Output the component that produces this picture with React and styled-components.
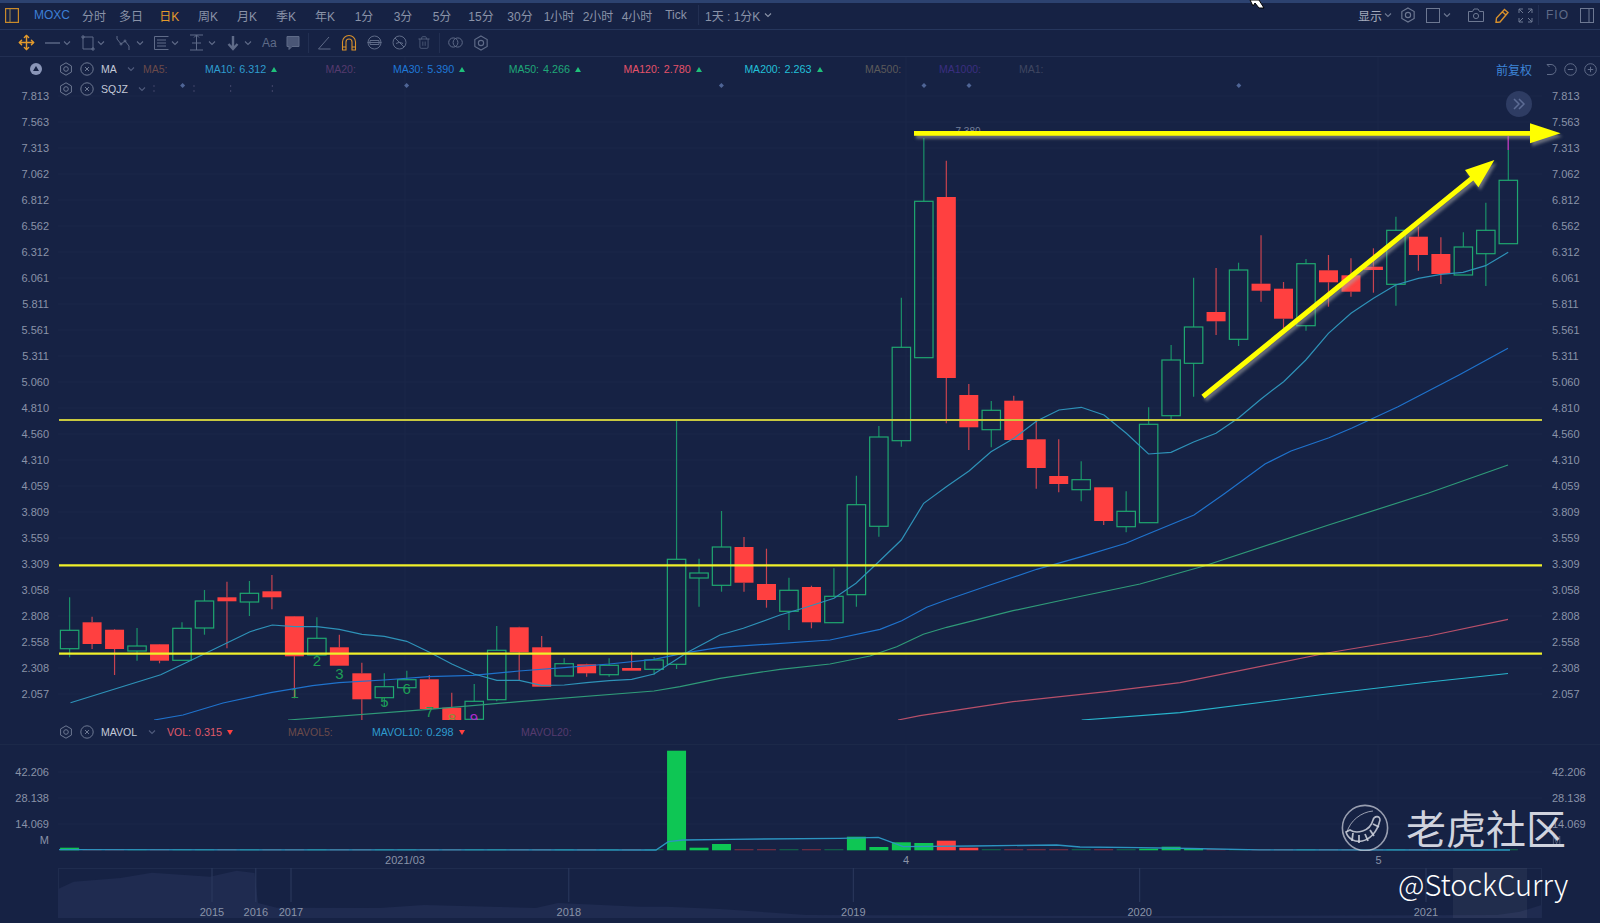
import styled, { createGlobalStyle } from "styled-components";
import { Move, Trash2 } from "lucide-react";

const GlobalStyle = createGlobalStyle`
  html, body {
    margin: 0;
    padding: 0;
    background: #162244;
    overflow: hidden;
  }
  * { box-sizing: border-box; }
`;

// styles
const Page = styled.div`
  position: relative;
  width: 1600px;
  height: 923px;
  overflow: hidden;
  background: #162244;
  color: #8a93a8;
  font-family: "Liberation Sans", "Noto Sans CJK SC", sans-serif;
  font-size: 12px;
`;

const TopStrip = styled.div`
  height: 3px;
  background: #2c4270;
`;

const Toolbar = styled.div`
  height: 27px;
  display: flex;
  align-items: center;
  padding: 0 6px 2px 5px;
  border-bottom: 1px solid #26365c;
`;

const BrandIcon = styled.svg`
  flex: none;
`;

const Symbol = styled.span`
  margin-left: 15px;
  width: 42px;
  color: #3d7fd6;
`;

const Tab = styled.span`
  width: ${(p) => p.$w || 39}px;
  text-align: center;
  white-space: nowrap;
  color: ${(p) => (p.$active ? "#e39a2c" : "#8a93a8")};
`;

const Divider = styled.span`
  flex: none;
  width: 1px;
  height: 20px;
  margin: ${(p) => p.$m || "0"};
  background: #222f52;
`;

const PeriodPicker = styled.span`
  display: flex;
  align-items: center;
  gap: 4px;
  margin-left: 6px;
  white-space: nowrap;
`;

const RightTools = styled.div`
  margin-left: auto;
  display: flex;
  align-items: center;
`;

const RightTool = styled.span`
  display: flex;
  align-items: center;
  margin-left: ${(p) => p.$ml || 0}px;
  color: ${(p) => p.$color || "#6d7892"};
`;

const FioLabel = styled.span`
  margin-left: 7px;
  font-size: 12px;
  letter-spacing: 1px;
  color: #5f6b88;
`;

const DrawBar = styled.div`
  height: 27px;
  display: flex;
  align-items: center;
  gap: 10px;
  padding: 0 0 1px 18px;
  border-bottom: 1px solid #222f52;
  color: #5f6b88;
`;

const Tool = styled.span`
  flex: none;
  width: ${(p) => p.$w}px;
  display: flex;
  align-items: center;
  justify-content: space-between;
  color: ${(p) => p.$color || "#5f6b88"};
`;

const AaLabel = styled.span`
  flex: none;
  width: 14px;
  font-size: 12px;
  color: #5f6b88;
`;

const PricePane = styled.div`
  position: relative;
  height: 663px;
  display: flex;
`;

const LeftAxis = styled.div`
  flex: none;
  width: 58px;
  padding: ${(p) => p.$pt}px 9px 0 0;
  text-align: right;
  font-size: 11px;
  color: #8a93a8;
`;

const RightAxis = styled.div`
  flex: none;
  width: 58px;
  padding: ${(p) => p.$pt}px 0 0 10px;
  font-size: 11px;
  color: #8a93a8;
`;

const AxisLabel = styled.div`
  height: ${(p) => p.$h || 26}px;
  line-height: ${(p) => p.$h || 26}px;
  opacity: ${(p) => p.$o || 1};
`;

const Plot = styled.svg`
  flex: none;
  display: block;
  width: 1484px;
  height: ${(p) => p.$h}px;
`;

const Legends = styled.div`
  position: absolute;
  top: 2px;
  left: 0;
  right: 0;
`;

const LegendRow = styled.div`
  height: 20px;
  display: flex;
  align-items: center;
  padding-left: ${(p) => p.$pl || 0}px;
`;

const CollapseDot = styled.svg`
  flex: none;
  margin-right: 17px;
`;

const LegendHead = styled.div`
  flex: none;
  width: ${(p) => p.$w}px;
  display: flex;
  align-items: center;
  gap: 7px;
  color: #6d7892;
`;

const HeadName = styled.span`
  font-size: 10.5px;
  color: #c3c9d8;
`;

const HeadChevron = styled.span`
  display: flex;
  margin-left: ${(p) => p.$ml || 3}px;
  color: #4f5b7c;
`;

const LegendItem = styled.div`
  flex: none;
  width: ${(p) => p.$w}px;
  display: flex;
  align-items: center;
  gap: 4px;
  color: ${(p) => p.$color};
  font-size: 10.5px;
  white-space: nowrap;
`;

const LegendValue = styled.span`
  font-size: 10.8px;
`;

const Tri = styled.span`
  width: 0;
  height: 0;
  margin-left: 1px;
  border-left: 3px solid transparent;
  border-right: 3px solid transparent;
  border-bottom: ${(p) => (p.$down ? "0" : `5px solid ${p.$color}`)};
  border-top: ${(p) => (p.$down ? `5px solid ${p.$color}` : "0")};
`;

const AdjustGroup = styled.div`
  margin-left: auto;
  display: flex;
  align-items: center;
  gap: 7px;
  padding-right: 3px;
  color: #5f6b88;
`;

const AdjustLabel = styled.span`
  margin-right: 7px;
  color: #3d85d8;
`;

const ExpandButton = styled.div`
  position: absolute;
  top: 34px;
  left: 1506px;
  width: 26px;
  height: 26px;
  border-radius: 50%;
  background: #2e3c63;
  color: #5d6c94;
  display: flex;
  align-items: center;
  justify-content: center;
`;

const VolumeLegend = styled.div`
  height: 25px;
  display: flex;
  align-items: center;
  padding-left: 59px;
  border-bottom: 1px solid #1c2949;
`;

const VolumePane = styled.div`
  height: 107px;
  display: flex;
`;

const TimeAxis = styled.svg`
  display: block;
  width: 1600px;
  height: 16px;
`;

const Navigator = styled.svg`
  display: block;
  width: 1600px;
  height: 50px;
`;

const Overlay = styled.svg`
  position: absolute;
  top: 0;
  left: 0;
  width: 1600px;
  height: 923px;
  pointer-events: none;
`;

const DrawnArrows = styled.g`
  fill: #ffff00;
  filter: drop-shadow(2px 3px 1.5px rgba(170, 170, 170, 0.55));
`;

const Watermark = styled.div`
  position: absolute;
  left: 1341px;
  top: 803px;
  display: flex;
  align-items: center;
  gap: 17px;
`;

const WatermarkText = styled.span`
  font-family: "Noto Sans CJK SC", sans-serif;
  font-size: 40px;
  line-height: 48px;
  font-weight: 400;
  color: #d0d3de;
  white-space: nowrap;
`;

const Handle = styled.div`
  position: absolute;
  left: 1398px;
  top: 861px;
  font-family: "Noto Sans CJK SC", sans-serif;
  font-size: 29px;
  line-height: 44px;
  font-weight: 300;
  color: #ffffff;
  white-space: nowrap;
`;

// small icons
const Chevron = ({ size = 8 }) => (
  <svg width={size} height={size} viewBox="0 0 8 8" fill="none" stroke="currentColor" strokeWidth="1.1">
    <path d="M1 2.5 4 5.5 7 2.5" />
  </svg>
);

const Gear = ({ size = 14 }) => (
  <svg width={size} height={size} viewBox="0 0 14 14" fill="none" stroke="currentColor" strokeWidth="1">
    <path d="M7 .8 12.4 3.9V10.1L7 13.2 1.6 10.1V3.9Z" />
    <circle cx="7" cy="7" r="2.3" />
  </svg>
);

const CloseCircle = ({ size = 14 }) => (
  <svg width={size} height={size} viewBox="0 0 14 14" fill="none" stroke="currentColor" strokeWidth="1">
    <circle cx="7" cy="7" r="6.2" />
    <path d="M5 5 9 9M9 5 5 9" />
  </svg>
);

const CircleSign = ({ plus }) => (
  <svg width="13" height="13" viewBox="0 0 13 13" fill="none" stroke="currentColor" strokeWidth="1">
    <circle cx="6.5" cy="6.5" r="5.8" />
    <path d={plus ? "M3.8 6.5H9.2M6.5 3.8V9.2" : "M3.8 6.5H9.2"} />
  </svg>
);

const ToolIcon = ({ w = 14, h = 16, d, fill = "none", sw = 1, children }) => (
  <svg width={w} height={h} viewBox={`0 0 ${w} ${h}`} fill={fill} stroke="currentColor" strokeWidth={sw}>
    {d && <path d={d} />}
    {children}
  </svg>
);

// price data: [type, wick top, body top, body bottom, wick bottom]
const candles = [
  ["g", 597.3, 630.3, 648.7, 657.3],
  ["r", 616.7, 622.3, 644, 649],
  ["r", 629, 629.7, 649, 675],
  ["g", 628, 646, 651, 660.7],
  ["r", 644, 644.3, 660.7, 663.3],
  ["g", 622.3, 628.3, 660.3, 660.3],
  ["g", 590, 601, 628, 634.7],
  ["r", 581.7, 597.3, 601.3, 648.3],
  ["g", 581, 593.3, 602, 616],
  ["r", 575, 591.3, 597.3, 609.3],
  ["r", 616, 616.3, 656.3, 698.3],
  ["g", 617.3, 638.3, 655, 656],
  ["r", 634.7, 647.3, 665.7, 665.7],
  ["r", 662.7, 673.3, 699.3, 720],
  ["g", 673.3, 686.7, 697.7, 706.7],
  ["g", 670.7, 679.7, 687.7, 687.7],
  ["r", 675, 679.3, 709, 709],
  ["r", 692.7, 707.7, 722, 722],
  ["g", 684, 701.3, 719.3, 722],
  ["g", 626, 650.3, 699.7, 701.3],
  ["r", 626.7, 627.3, 652.3, 680],
  ["r", 636, 647.3, 686.7, 686.7],
  ["g", 658.3, 663.7, 676, 676],
  ["r", 663.7, 664.3, 673.3, 676.7],
  ["g", 658.3, 665.3, 674.7, 676.7],
  ["r", 651.7, 668, 670.7, 670.7],
  ["g", 657.3, 660, 669.3, 674.7],
  ["g", 419.3, 559.3, 664.3, 669],
  ["g", 558.7, 573, 578, 606.7],
  ["g", 511, 547, 585.3, 591.7],
  ["r", 537, 547, 582.7, 591.7],
  ["r", 548.7, 584, 600, 607.7],
  ["g", 577.7, 590.3, 611.3, 630],
  ["r", 585.7, 587, 622.3, 628.3],
  ["g", 568.3, 596.3, 622.7, 622.7],
  ["g", 475.7, 504.7, 594.7, 606.7],
  ["g", 426, 437, 526.3, 536.7],
  ["g", 297.7, 347.3, 440.7, 446.7],
  ["g", 138, 201.3, 357.7, 357.7],
  ["r", 160.7, 197, 378, 423.3],
  ["r", 384, 395, 427.3, 450],
  ["g", 401, 410.3, 429.7, 447.3],
  ["r", 395.7, 400.7, 440, 440],
  ["r", 421.7, 439.3, 468, 488.7],
  ["r", 439.3, 476, 484, 492.3],
  ["g", 461.3, 479.7, 489.7, 501.3],
  ["r", 487.3, 487.3, 521, 525],
  ["g", 491.3, 511.3, 526.7, 532.3],
  ["g", 407.3, 424.3, 522.7, 522.7],
  ["g", 345, 360, 415.7, 420],
  ["g", 277.7, 327, 363.3, 396.7],
  ["r", 268, 312, 321.3, 335],
  ["g", 262.7, 270, 339.3, 346],
  ["r", 235.3, 283.7, 290.7, 301.7],
  ["r", 282, 288.7, 318.7, 328.3],
  ["g", 259, 263.7, 325.7, 330.7],
  ["r", 255, 270.3, 282.3, 306.7],
  ["r", 258.3, 275.3, 291.7, 296.7],
  ["r", 248.3, 266.7, 270, 292.7],
  ["g", 216.7, 230.3, 284.3, 305.7],
  ["r", 226.7, 236.7, 255, 270.7],
  ["r", 237.3, 254, 274, 284],
  ["g", 232.3, 247, 275, 275],
  ["g", 202.7, 230.3, 253.7, 286],
  ["g", 136.7, 180.3, 243.7, 243.7],
];

const candleX = (i) => 69.6 + 22.48 * i;

const ma10 = "70.5,702.7 160.7,674.7 187.5,662 250,631.7 272.3,625 294.6,626.7 317,626.7 339.3,629.3 362,634.3 384.4,636.3 406.7,641.3 429.5,652.3 451.8,664 474,674 496.9,680.3 519.2,680.3 541.5,685.3 564.3,685 586.6,682.7 609.4,680.7 631.7,679.3 654,674 686.7,652.7 720,635 743.3,628.3 780,615 803,608.3 834,598.3 856,583.3 878.7,561.7 901.3,540 923.7,503.3 946.3,486.7 969,471 991,451.7 1014,438.3 1036.7,421 1059,410 1081.3,407.3 1104,415 1126.3,433.3 1148.5,454 1171,452.3 1193.6,442 1216,433.3 1238.8,417.7 1261.4,398.7 1283.6,381.7 1305.8,360 1328.4,333.3 1351,313.3 1373.5,298.3 1395.7,285 1418.3,278.3 1440.9,274.3 1463,272.3 1485.6,265.7 1508.2,252.3";
const ma30 = "154,720 183,715 223,703 272,692.3 312.5,685.7 339,682.7 384,680 428.6,676.7 473,675.3 519,671 564,667.7 609.4,664 654,659.3 686.7,652.7 720,647.3 766.7,644.3 830,640 880,629.3 901.7,620.7 926.7,607.3 946.3,600 990,585 1036.7,569.3 1081.7,556.7 1126,543.3 1140,537.3 1194,515 1224,494 1265,464 1291,451 1329,437.7 1352,428 1398,406.7 1459,375 1508,348.3";
const ma50 = "288,720 428.6,709.3 519,701.7 654,691 680,686.7 720,678.3 780,669.3 830,664 870,656 896.7,646.7 923.3,634.3 946.7,627.3 1013,610.7 1063,600 1140,584 1204,566 1327,525.5 1428.6,493 1508,465";
const ma120 = "898,720 920,715.7 1013,701.7 1106.7,691.7 1180,682.7 1327,653 1429,636 1508,619.4";
const ma200 = "1081.7,720 1180,712.7 1327,694 1429,682 1508,673.5";

const waveMarks = [
  ["1", 294.6, 698, "#1f9d55"],
  ["2", 317, 666, "#1f9d55"],
  ["3", 339.3, 679, "#1f9d55"],
  ["5", 384.4, 707, "#1f9d55"],
  ["6", 406.7, 694, "#1f9d55"],
  ["7", 429.5, 717, "#1f9d55"],
  ["8", 451.8, 724, "#8a8f3a"],
  ["9", 474, 724, "#b02ad0"],
];

const priceLabels = ["7.813", "7.563", "7.313", "7.062", "6.812", "6.562", "6.312", "6.061", "5.811", "5.561", "5.311", "5.060", "4.810", "4.560", "4.310", "4.059", "3.809", "3.559", "3.309", "3.058", "2.808", "2.558", "2.308", "2.057"];

const sqjzDots = [182.6, 406.6, 721.4, 924, 969, 1238.8];
const sqjzColons = [154, 194, 230.6, 272.4];

// volume heights that stand out, the rest are thin dashes
const volumes = { 0: 2.6, 27: 99.6, 28: 2.6, 29: 6.3, 35: 13.6, 36: 3.3, 37: 8, 38: 7.3, 39: 9.6, 40: 2.6, 48: 1.6, 49: 3.6, 50: 2 };

const navArea = "58,918 58,889 73.7,881.7 120.5,878 151.8,872.7 210,876.7 236.6,870.7 254.5,873 258,903 276.8,907.7 379.5,908 424,905 535.7,908 558,903 640,906.7 666.7,906.7 720,909 806.7,915 1140,916 1497,915 1520,911.7 1541.5,905 1541.5,918";
const navYears = [["2015", 212], ["2016", 255.8], ["2017", 291], ["2018", 568.8], ["2019", 853.3], ["2020", 1139.7], ["2021", 1426]];

const tabs = ["周K", "月K", "季K", "年K", "1分", "3分", "5分", "15分", "30分", "1小时", "2小时", "4小时", "Tick"];

const maLegend = [
  { name: "MA5:", w: 62, color: "#6b4a4a" },
  { name: "MA10:", value: "6.312", w: 120.5, color: "#2e9ccf" },
  { name: "MA20:", w: 67.5, color: "#553a6e" },
  { name: "MA30:", value: "5.390", w: 115.7, color: "#1f78d8" },
  { name: "MA50:", value: "4.266", w: 114.8, color: "#1fa878" },
  { name: "MA120:", value: "2.780", w: 120.9, color: "#e5526a" },
  { name: "MA200:", value: "2.263", w: 120.6, color: "#22c0d8" },
  { name: "MA500:", w: 74, color: "#5b5a5a" },
  { name: "MA1000:", w: 80, color: "#3b2e80" },
  { name: "MA1:", w: 60, color: "#3f4660" },
];

const PricePlot = () => (
  <Plot $h={663} viewBox="58 57 1484 663">
    {priceLabels.map((label, i) => (
      <line key={label} x1="58" x2="1542" y1={96 + 26 * i} y2={96 + 26 * i} stroke="#1a2748" />
    ))}
    <path d="M405 57V720M906 57V720M1378 57V720" stroke="#1a2748" fill="none" />
    {candles.map(([type, top, open, close, bottom], i) => {
      const x = candleX(i);
      const wick = type === "g" ? "#1a9068" : "#c8434f";
      return (
        <g key={i}>
          <line x1={x} x2={x} y1={top} y2={open} stroke={wick} strokeWidth="1.2" />
          <line x1={x} x2={x} y1={close} y2={bottom} stroke={wick} strokeWidth="1.2" />
          {type === "g" ? (
            <rect x={x - 9.2} y={open} width="18.4" height={close - open} fill="none" stroke="#1fa870" strokeWidth="1.2" />
          ) : (
            <rect x={x - 9.5} y={open} width="19" height={close - open} fill="#ff4040" />
          )}
        </g>
      );
    })}
    <line x1="1508.2" x2="1508.2" y1="136" y2="150" stroke="#d020c0" strokeWidth="1.2" />
    {waveMarks.map(([n, x, y, color]) => (
      <text key={n} x={x} y={y} fill={color} fontSize="15" textAnchor="middle" fontFamily="Liberation Sans, sans-serif">
        {n}
      </text>
    ))}
    <g fill="none" strokeWidth="1.2">
      <polyline points={ma50} stroke="#2f9a78" />
      <polyline points={ma30} stroke="#1f72cc" />
      <polyline points={ma10} stroke="#2e92b8" />
      <polyline points={ma120} stroke="#b8506a" />
      <polyline points={ma200} stroke="#28b4cc" />
    </g>
    <line x1="59" x2="1542" y1="420" y2="420" stroke="#c9c93f" strokeWidth="2" />
    <line x1="59" x2="1542" y1="565.3" y2="565.3" stroke="#f0f02a" strokeWidth="2.2" />
    <line x1="59" x2="1542" y1="653.7" y2="653.7" stroke="#f0f02a" strokeWidth="2.2" />
    <text x="968" y="135" fill="#77809a" fontSize="10" textAnchor="middle" fontFamily="Liberation Sans, sans-serif">7.380</text>
    {sqjzDots.map((x) => (
      <path key={x} d={`M${x} 83 ${x + 2.5} 85.5 ${x} 88 ${x - 2.5} 85.5Z`} fill="#4f6596" />
    ))}
    {sqjzColons.map((x) => (
      <path key={x} d={`M${x} 85V87M${x} 90V92`} stroke="#3a3f63" strokeWidth="1.2" />
    ))}
  </Plot>
);

const VolumePlot = () => (
  <Plot $h={107} viewBox="58 745 1484 107">
    <path d="M58 772H1542M58 798H1542M58 824H1542M906 745V852M1378 745V852" stroke="#1a2748" fill="none" />
    {candles.map(([type], i) => {
      const h = volumes[i] || 1.2;
      const color = type === "g" ? "#0ec654" : "#ff4040";
      return <rect key={i} x={candleX(i) - 9.5} y={850.3 - h} width="19" height={h} fill={color} opacity={volumes[i] ? 1 : 0.4} />;
    })}
    <polyline
      fill="none"
      stroke="#2c94c0"
      strokeWidth="1.3"
      points="59,849.7 656,850 668.3,841.7 683.3,840 730,839.3 840,838.3 878.3,837.3 903.3,846.7 973,846 1056.7,845 1080,847 1140,847.7 1190,848.5 1260,849.8 1510,850"
    />
  </Plot>
);

const App = () => {
  return (
    <Page>
      <GlobalStyle />
      <TopStrip />
      <Toolbar>
        <BrandIcon width="14" height="15" viewBox="0 0 14 15" fill="none" stroke="#c98a2a" strokeWidth="1.2">
          <rect x=".6" y=".6" width="12.8" height="13.8" />
          <path d="M5 1V14" stroke="#8a7a50" />
        </BrandIcon>
        <Symbol>MOXC</Symbol>
        <Tab $w={36}>分时</Tab>
        <Tab $w={38}>多日</Tab>
        <Tab $w={38.5} $active>日K</Tab>
        {tabs.map((t) => (
          <Tab key={t}>{t}</Tab>
        ))}
        <Divider $m="0 0 0 2.5px" />
        <PeriodPicker>
          1天 : 1分K
          <Chevron />
        </PeriodPicker>
        <RightTools>
          <RightTool $color="#a4abbc">显示</RightTool>
          <RightTool $ml={2}><Chevron /></RightTool>
          <RightTool $ml={8}><Gear size={16} /></RightTool>
          <RightTool $ml={10}>
            <ToolIcon w={14} h={15}><rect x=".5" y=".5" width="13" height="14" /></ToolIcon>
          </RightTool>
          <RightTool $ml={3}><Chevron /></RightTool>
          <RightTool $ml={17}>
            <ToolIcon w={16} h={14} d="M.5 3.5H4.5L6 1H10L11.5 3.5H15.5V13.5H.5Z"><circle cx="8" cy="8" r="2.6" /></ToolIcon>
          </RightTool>
          <RightTool $ml={11} $color="#d9912c">
            <ToolIcon w={14} h={15} sw={1.4} d="M9.5 1.5 13 4.5 5 14 1 14.5 1.5 10ZM7.5 4 11 7" />
          </RightTool>
          <RightTool $ml={9}>
            <ToolIcon w={15} h={15} d="M1 5V1H5M1 1 5 5M10 1H14V5M14 1 10 5M1 10V14H5M1 14 5 10M14 10V14H10M14 14 10 10" />
          </RightTool>
          <Divider $m="0 0 0 5px" />
          <FioLabel>FIO</FioLabel>
          <RightTool $ml={11}>
            <ToolIcon w={14} h={15}>
              <rect x=".5" y=".5" width="13" height="14" />
              <path d="M9 1V14" />
            </ToolIcon>
          </RightTool>
        </RightTools>
      </Toolbar>
      <DrawBar>
        <Tool $w={17} $color="#e39a2c">
          <Move size={17} strokeWidth={2} />
        </Tool>
        <Tool $w={26}>
          <ToolIcon w={15} h={4} sw={1.4} d="M0 2H15" />
          <Chevron />
        </Tool>
        <Tool $w={24}>
          <ToolIcon w={14} h={16} d="M2 2H12V14H2ZM1 1H3V3H1ZM11 13H13V15H11Z" />
          <Chevron />
        </Tool>
        <Tool $w={29}>
          <ToolIcon w={17} h={16} d="M2 1V4L6 9 10 6 14 11V15">
            <circle cx="6" cy="9" r="1" />
            <circle cx="10" cy="6" r="1" />
          </ToolIcon>
          <Chevron />
        </Tool>
        <Tool $w={25}>
          <ToolIcon w={15} h={16} d="M.5 1.5H14.5M.5 14.5H14.5M.5 1.5V14.5M3 5H12M3 8H12M3 11H12" />
          <Chevron />
        </Tool>
        <Tool $w={27}>
          <ToolIcon w={15} h={17} d="M1 1H14M1 16H14M7.5 1V16M5 3.5 7.5 1 10 3.5M3 9H12" />
          <Chevron />
        </Tool>
        <Tool $w={26}>
          <ToolIcon w={14} h={16} sw={2.4} d="M7 1V13M2.5 9 7 14 11.5 9" />
          <Chevron />
        </Tool>
        <AaLabel>Aa</AaLabel>
        <Tool $w={14}>
          <ToolIcon w={14} h={16} fill="#4a5676" d="M1 1.5H13V11.5H6L3 14.5V11.5H1Z" />
        </Tool>
        <Divider $m="0 -2px" />
        <Tool $w={14}>
          <ToolIcon w={14} h={14} d="M12 1 1.5 13H13.5" />
        </Tool>
        <Tool $w={16} $color="#d9912c">
          <ToolIcon w={16} h={18} sw={1.1} d="M1.5 16V8A6.5 6.5 0 0 1 14.5 8V16H11V8A3 3 0 0 0 5 8V16ZM1.5 13H5M11 13H14.5" />
        </Tool>
        <Tool $w={15}>
          <ToolIcon w={15} h={15}>
            <circle cx="7.5" cy="7.5" r="6.5" />
            <path d="M.5 7.5H14.5M3 5.5H12V9.5H3Z" />
          </ToolIcon>
        </Tool>
        <Tool $w={15}>
          <ToolIcon w={15} h={15}>
            <circle cx="7.5" cy="7.5" r="6.5" />
            <path d="M3 3 12 12M4 8.5A5 3.5 0 0 1 11 8.5" />
          </ToolIcon>
        </Tool>
        <Tool $w={14}>
          <Trash2 size={15} strokeWidth={1.2} />
        </Tool>
        <Divider $m="0 -2px" />
        <Tool $w={15}>
          <ToolIcon w={15} h={11}>
            <circle cx="5.3" cy="5.5" r="4.6" />
            <circle cx="9.7" cy="5.5" r="4.6" />
          </ToolIcon>
        </Tool>
        <Tool $w={16}>
          <Gear size={16} />
        </Tool>
      </DrawBar>
      <PricePane>
        <LeftAxis $pt={26}>
          {priceLabels.map((l) => (
            <AxisLabel key={l}>{l}</AxisLabel>
          ))}
        </LeftAxis>
        <PricePlot />
        <RightAxis $pt={26}>
          {priceLabels.map((l) => (
            <AxisLabel key={l}>{l}</AxisLabel>
          ))}
        </RightAxis>
        <Legends>
          <LegendRow $pl={30}>
            <CollapseDot width="12" height="12" viewBox="0 0 12 12">
              <circle cx="6" cy="6" r="6" fill="#8a96b8" />
              <path d="M6 3 9 8H3Z" fill="#162244" />
            </CollapseDot>
            <LegendHead $w={84}>
              <Gear />
              <CloseCircle />
              <HeadName>MA</HeadName>
              <HeadChevron><Chevron /></HeadChevron>
            </LegendHead>
            {maLegend.map((m) => (
              <LegendItem key={m.name} $w={m.w} $color={m.color}>
                {m.name}
                {m.value && <LegendValue>{m.value}</LegendValue>}
                {m.value && <Tri $color="#1fc07a" />}
              </LegendItem>
            ))}
            <AdjustGroup>
              <AdjustLabel>前复权</AdjustLabel>
              <ToolIcon w={11} h={13} d="M1 1.5H5A5 5 0 0 1 5 11.5H1M1 1.5 3.5 4" />
              <CircleSign />
              <CircleSign plus />
            </AdjustGroup>
          </LegendRow>
          <LegendRow $pl={59}>
            <LegendHead $w={90}>
              <Gear />
              <CloseCircle />
              <HeadName>SQJZ</HeadName>
              <HeadChevron><Chevron /></HeadChevron>
            </LegendHead>
          </LegendRow>
        </Legends>
        <ExpandButton>
          <svg width="14" height="12" viewBox="0 0 14 12" fill="none" stroke="currentColor" strokeWidth="1.5">
            <path d="M2 1 7 6 2 11M7 1 12 6 7 11" />
          </svg>
        </ExpandButton>
      </PricePane>
      <VolumeLegend>
        <LegendHead $w={108}>
          <Gear />
          <CloseCircle />
          <HeadName>MAVOL</HeadName>
          <HeadChevron $ml={4}><Chevron /></HeadChevron>
        </LegendHead>
        <LegendItem $w={121} $color="#e05a6a">
          VOL:
          <LegendValue>0.315</LegendValue>
          <Tri $down $color="#ff4040" />
        </LegendItem>
        <LegendItem $w={84} $color="#6b4a4a">MAVOL5:</LegendItem>
        <LegendItem $w={149} $color="#2e9ccf">
          MAVOL10:
          <LegendValue>0.298</LegendValue>
          <Tri $down $color="#ff4040" />
        </LegendItem>
        <LegendItem $w={80} $color="#553a6e">MAVOL20:</LegendItem>
      </VolumeLegend>
      <VolumePane>
        <LeftAxis $pt={14}>
          <AxisLabel>42.206</AxisLabel>
          <AxisLabel>28.138</AxisLabel>
          <AxisLabel>14.069</AxisLabel>
          <AxisLabel $h={6}>M</AxisLabel>
        </LeftAxis>
        <VolumePlot />
        <RightAxis $pt={14}>
          <AxisLabel>42.206</AxisLabel>
          <AxisLabel>28.138</AxisLabel>
          <AxisLabel>14.069</AxisLabel>
          <AxisLabel $h={6} $o={0.5}>M</AxisLabel>
        </RightAxis>
      </VolumePane>
      <TimeAxis viewBox="0 852 1600 16">
        <g fill="#8a93a8" fontSize="11" textAnchor="middle" fontFamily="Liberation Sans, sans-serif">
          <text x="405" y="863.5">2021/03</text>
          <text x="906" y="863.5">4</text>
          <text x="1378.5" y="863.5">5</text>
        </g>
      </TimeAxis>
      <Navigator viewBox="0 868 1600 50">
        <rect x="58.5" y="868.5" width="1483" height="49" fill="none" stroke="#1f2c4e" />
        <polygon points={navArea} fill="#1f2b50" />
        <rect x="1453" y="868" width="74" height="50" fill="#ffffff" opacity="0.05" />
        {navYears.map(([year, x]) => (
          <g key={year}>
            <line x1={x} x2={x} y1="868" y2="902" stroke="#2c3a5e" />
            <text x={x} y="916" fill="#8a93a8" fontSize="11" textAnchor="middle" fontFamily="Liberation Sans, sans-serif">
              {year}
            </text>
          </g>
        ))}
      </Navigator>
      <Overlay viewBox="0 0 1600 923">
        <DrawnArrows>
          <path d="M914 131H1530V123.3L1560.6 133.3 1530 143.3V135.8H914Z" />
          <path d="M1201.4 394.8 1470 176.7 1465 170 1494.4 160 1478.4 187.3 1473.3 180.5 1204.6 398.6Z" />
        </DrawnArrows>
        <path d="M1250 0 1253 6 1255 3 1259 8 1264 8 1259 0Z" fill="#ffffff" stroke="#000000" strokeWidth="1" />
      </Overlay>
      <Watermark>
        <svg width="48" height="48" viewBox="0 0 48 48" fill="none" stroke="#d0d3de" strokeWidth="1.6">
          <circle cx="24" cy="25" r="22.6" opacity="0.7" />
          <path d="M6 29C9 18 20 9 32 8" strokeWidth="1" opacity="0.7" />
          <path d="M5 29C9 43 33 43 39 17C39 12 33 13 32 17C29 29 15 31 9 27Z" strokeWidth="1.6" opacity="0.85" />
          <path d="M12 30 11 38M18 32 18 40M24 31 27 38M29 27 33 33M32 21 38 24" strokeWidth="1.8" opacity="0.85" />
        </svg>
        <WatermarkText>老虎社区</WatermarkText>
      </Watermark>
      <Handle>@StockCurry</Handle>
    </Page>
  );
};

export default App;
